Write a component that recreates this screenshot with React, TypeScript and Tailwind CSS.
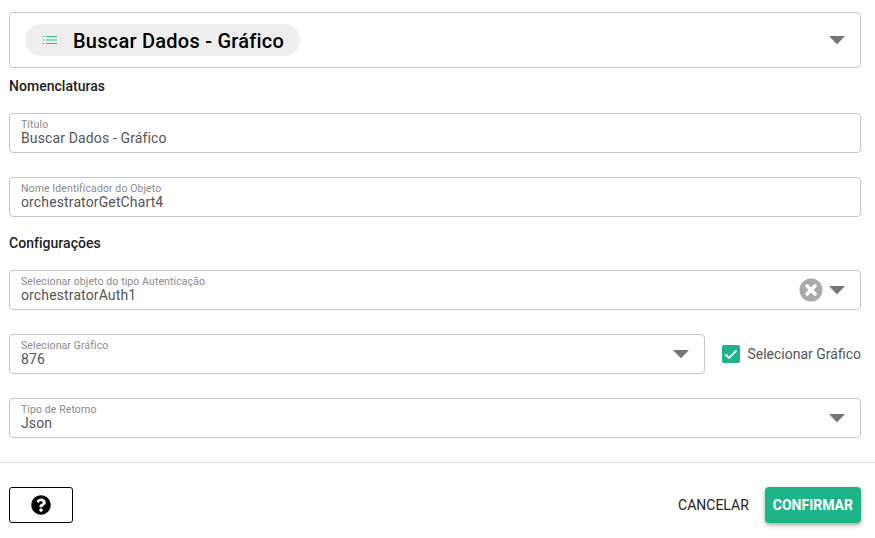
import { FaQuestionCircle } from 'react-icons/fa';

function Caret() {
  return (
    <svg width="16" height="8" viewBox="0 0 16 8" className="shrink-0">
      <path d="M0 0h16L8.8 7.4a1 1 0 0 1-1.6 0z" fill="#757575" />
    </svg>
  );
}

function ClearIcon() {
  return (
    <svg width="24" height="24" viewBox="0 0 24 24" className="shrink-0">
      <circle cx="12" cy="12" r="11.5" fill="#aaaaaa" />
      <path d="M8 8l8 8M16 8l-8 8" stroke="#fff" strokeWidth="3.6" strokeLinecap="round" />
    </svg>
  );
}

function Field({ label, value, children, className = '' }: { label: string; value: string; children?: React.ReactNode; className?: string }) {
  return (
    <div className={`flex h-10 items-center rounded border border-[#c4c4c4] pl-[11px] pr-[15px] ${className}`}>
      <div className="min-w-0 flex-1 pb-px">
        <div className="text-[10.5px] leading-[11px] tracking-[0.1px] text-[#8a8a8a]">{label}</div>
        <div className="text-sm leading-[16px] tracking-[0.13px] text-[#555555]">{value}</div>
      </div>
      {children}
    </div>
  );
}

function Heading({ children }: { children: React.ReactNode }) {
  return <h2 className="text-sm leading-5 font-medium tracking-[0.03px] text-[#222222]">{children}</h2>;
}

export default function App() {
  return (
    <div className="h-[538px] w-[875px] overflow-hidden bg-white font-['Roboto',sans-serif]">
      <div className="pl-[9px] pr-[14px] pt-3">
        {/* Selected node */}
        <div className="flex h-14 items-center justify-between rounded border border-[#c4c4c4] px-[15px]">
          <div className="flex h-8 w-[275px] items-center rounded-2xl bg-[#eeeeee] pl-[17px]">
            <svg width="16" height="12" viewBox="0 0 16 12" className="shrink-0">
              <path d="M4 2.500h11M4 6h11M4 9.500h11" stroke="#1db587" strokeWidth="0.9" />
              <path d="M1 2.500h1.500M1 6h1.500M1 9.500h1.500" stroke="#1db587" strokeWidth="0.9" />
            </svg>
            <span className="ml-[15px] pt-px text-xl leading-6 font-medium tracking-[0.24px] text-black">Buscar Dados - Gráfico</span>
          </div>
          <Caret />
        </div>

        <div className="mt-2 mb-[17px]">
          <Heading>Nomenclaturas</Heading>
        </div>
        <div className="flex flex-col gap-6">
          <Field label="Título" value="Buscar Dados - Gráfico" />
          <Field label="Nome Identificador do Objeto" value="orchestratorGetChart4" />
        </div>

        <div className="mt-4 mb-[17px]">
          <Heading>Configurações</Heading>
        </div>
        <div className="flex flex-col gap-6">
          <Field label="Selecionar objeto do tipo Autenticação" value="orchestratorAuth1">
            <div className="flex items-center gap-[6px]">
              <ClearIcon />
              <Caret />
            </div>
          </Field>
          <div className="flex items-center">
            <Field label="Selecionar Gráfico" value="876" className="flex-1">
              <Caret />
            </Field>
            <label className="ml-[17px] flex items-center gap-[7px]">
              <span className="flex h-[18px] w-[18px] items-center justify-center rounded-[2px] bg-[#1db587]">
                <svg width="16" height="16" viewBox="0 0 16 16">
                  <path d="M2.500 8.500l3.500 3.500L13.500 4.500" fill="none" stroke="#fff" strokeWidth="1.800" />
                </svg>
              </span>
              <span className="text-sm leading-5 text-[#555555]">Selecionar Gráfico</span>
            </label>
          </div>
          <Field label="Tipo de Retorno" value="Json">
            <Caret />
          </Field>
        </div>
      </div>

      <div className="mt-6 h-px bg-[#e0e0e0]" />

      <div className="flex items-center justify-between pl-[9px] pr-[14px] pt-6">
        <button className="flex h-9 w-16 items-center justify-center rounded-[3px] border border-black bg-white text-xl text-black">
          <FaQuestionCircle />
        </button>
        <div className="flex items-center gap-2">
          <button className="h-9 px-2 text-sm leading-none text-[#222222]">CANCELAR</button>
          <button className="h-9 rounded bg-[#1db587] px-2 text-sm leading-none font-bold text-white shadow-[0_2px_4px_rgba(0,0,0,0.35)]">CONFIRMAR</button>
        </div>
      </div>
    </div>
  );
}
